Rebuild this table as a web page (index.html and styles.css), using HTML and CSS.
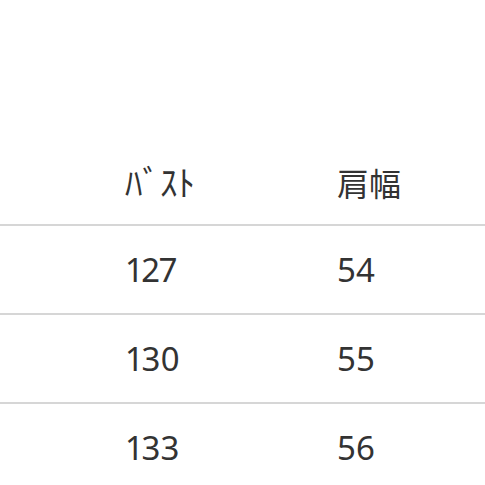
FILE: index.html
```html
<!DOCTYPE html>
<html lang="ja">
<head>
<meta charset="utf-8">
<link rel="stylesheet" href="styles.css">
</head>
<body>
<div class="table">
  <div class="row head">
    <div class="cell jp kana">ﾊﾞｽﾄ</div>
    <div class="cell jp">肩幅</div>
  </div>
  <div class="row">
    <div class="cell">127</div>
    <div class="cell">54</div>
  </div>
  <div class="row">
    <div class="cell">130</div>
    <div class="cell">55</div>
  </div>
  <div class="row last">
    <div class="cell">133</div>
    <div class="cell">56</div>
  </div>
</div>
</body>
</html>
```
FILE: styles.css
```css
html, body {
  margin: 0;
  padding: 0;
  background: #fff;
}
.table {
  width: 485px;
  color: #333;
  font-family: "Noto Sans", "Noto Sans CJK JP", sans-serif;
}
.row {
  display: grid;
  grid-template-columns: 210px 1fr;
  padding-left: 127px;
  height: 87px;
  align-items: center;
  border-bottom: 2px solid #d6d6d6;
  font-size: 33px;
  line-height: 1;
  font-variant-numeric: proportional-nums;
}
.row.head {
  height: 224px;
  align-items: end;
}
.row.head .cell {
  padding-bottom: 26px;
}
.row.last {
  border-bottom: none;
}
.jp {
  font-family: "Noto Sans CJK JP", sans-serif;
  font-size: 32px;
}
.jp.kana {
  font-size: 35px;
  margin-left: -2px;
}
```
